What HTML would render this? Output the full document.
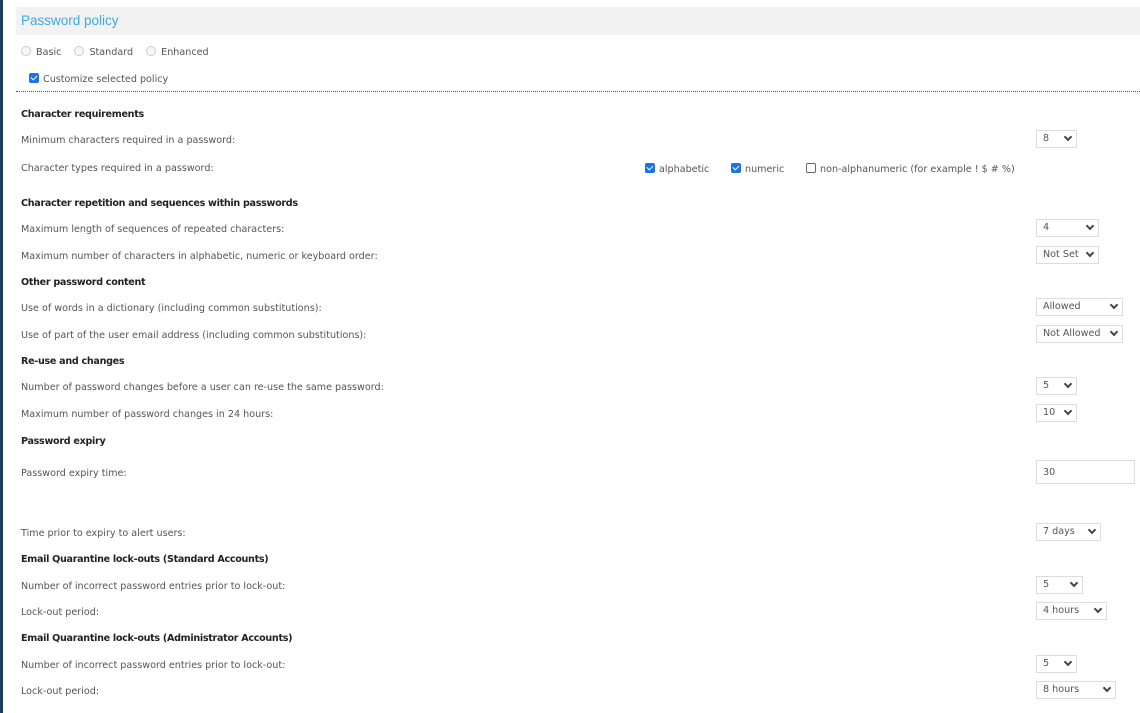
<!DOCTYPE html>
<html><head><meta charset="utf-8"><style>
*{box-sizing:border-box}
body{margin:0;width:1140px;height:713px;overflow:hidden;background:#fff;font-family:"DejaVu Sans","Liberation Sans",sans-serif;font-size:9.6px;color:#555;position:relative}
.lb{position:absolute;left:0;top:0;width:3px;height:713px;background:#1e3a5c}
.hd{position:absolute;left:16px;top:7px;width:1124px;height:28px;background:#f2f2f2}
.hd span{position:absolute;left:5px;top:6px;font-size:13.5px;color:#3fa9dd;font-family:"Liberation Sans",sans-serif}
.t{position:absolute;left:21px;white-space:nowrap;line-height:12px}
.b{font-weight:bold;color:#222;letter-spacing:-0.3px}
.line{position:absolute;left:16px;top:91px;width:1124px;border-top:1px dotted #555}
.s{position:absolute;left:1036px;height:18px;border:1px solid #ddd;color:#555;padding:2px 0 0 6px;line-height:12px}
.s i{position:absolute;right:5px;top:3px;width:6px;height:6px;border-right:2px solid #444;border-bottom:2px solid #444;transform:rotate(45deg);}
.rd{display:inline-block;width:10px;height:10px;border:1px solid #ccc;border-radius:50%;vertical-align:-1px;margin-right:5px;background:#f7f7f7}
.cb{display:inline-block;width:10px;height:10px;border-radius:2px;background:#1a73e8;vertical-align:-1px;margin-right:4px;position:relative}
.cb:after{content:"";position:absolute;left:3px;top:1px;width:3px;height:5px;border-right:1.5px solid #fff;border-bottom:1.5px solid #fff;transform:rotate(45deg)}
.cbe{display:inline-block;width:10px;height:10px;border-radius:2px;border:1px solid #666;vertical-align:-1px;margin-right:4px}
</style></head><body>
<div class="lb"></div>
<div class="hd"><span>Password policy</span></div>
<div class="t" style="top:46px"><span class="rd"></span>Basic <span style="margin-left:10px" class="rd"></span>Standard <span style="margin-left:10px" class="rd"></span>Enhanced</div>
<div class="t" style="top:73px;left:29px"><span class="cb"></span>Customize selected policy</div>
<div class="line"></div>
<div class="t b" style="top:109px">Character requirements</div>
<div class="t" style="top:135px">Minimum characters required in a password:</div>
<div class="t" style="top:163px">Character types required in a password:</div>
<div class="t" style="top:163px;left:645px"><span class="cb"></span>alphabetic</div>
<div class="t" style="top:163px;left:731px"><span class="cb"></span>numeric</div>
<div class="t" style="top:163px;left:806px"><span class="cbe"></span>non-alphanumeric (for example ! $ # %)</div>
<div class="t b" style="top:198px">Character repetition and sequences within passwords</div>
<div class="t" style="top:224px">Maximum length of sequences of repeated characters:</div>
<div class="t" style="top:251px">Maximum number of characters in alphabetic, numeric or keyboard order:</div>
<div class="t b" style="top:277px">Other password content</div>
<div class="t" style="top:303px">Use of words in a dictionary (including common substitutions):</div>
<div class="t" style="top:330px">Use of part of the user email address (including common substitutions):</div>
<div class="t b" style="top:356px">Re-use and changes</div>
<div class="t" style="top:382px">Number of password changes before a user can re-use the same password:</div>
<div class="t" style="top:409px">Maximum number of password changes in 24 hours:</div>
<div class="t b" style="top:436px">Password expiry</div>
<div class="t" style="top:468px">Password expiry time:</div>
<div class="t" style="top:528px">Time prior to expiry to alert users:</div>
<div class="t b" style="top:554px">Email Quarantine lock-outs (Standard Accounts)</div>
<div class="t" style="top:581px">Number of incorrect password entries prior to lock-out:</div>
<div class="t" style="top:607px">Lock-out period:</div>
<div class="t b" style="top:633px">Email Quarantine lock-outs (Administrator Accounts)</div>
<div class="t" style="top:660px">Number of incorrect password entries prior to lock-out:</div>
<div class="t" style="top:686px">Lock-out period:</div>

<div class="s" style="top:130px;width:41px">8<i></i></div>
<div class="s" style="top:219px;width:63px">4<i></i></div>
<div class="s" style="top:246px;width:63px">Not Set<i></i></div>
<div class="s" style="top:298px;width:87px">Allowed<i></i></div>
<div class="s" style="top:325px;width:87px">Not Allowed<i></i></div>
<div class="s" style="top:377px;width:41px">5<i></i></div>
<div class="s" style="top:404px;width:41px">10<i></i></div>
<div class="s" style="top:460px;width:99px;height:24px;padding-top:6px">30</div>
<div class="s" style="top:523px;width:65px">7 days<i></i></div>
<div class="s" style="top:576px;width:47px">5<i></i></div>
<div class="s" style="top:602px;width:71px">4 hours<i></i></div>
<div class="s" style="top:655px;width:41px">5<i></i></div>
<div class="s" style="top:681px;width:80px">8 hours<i></i></div>
</body></html>
